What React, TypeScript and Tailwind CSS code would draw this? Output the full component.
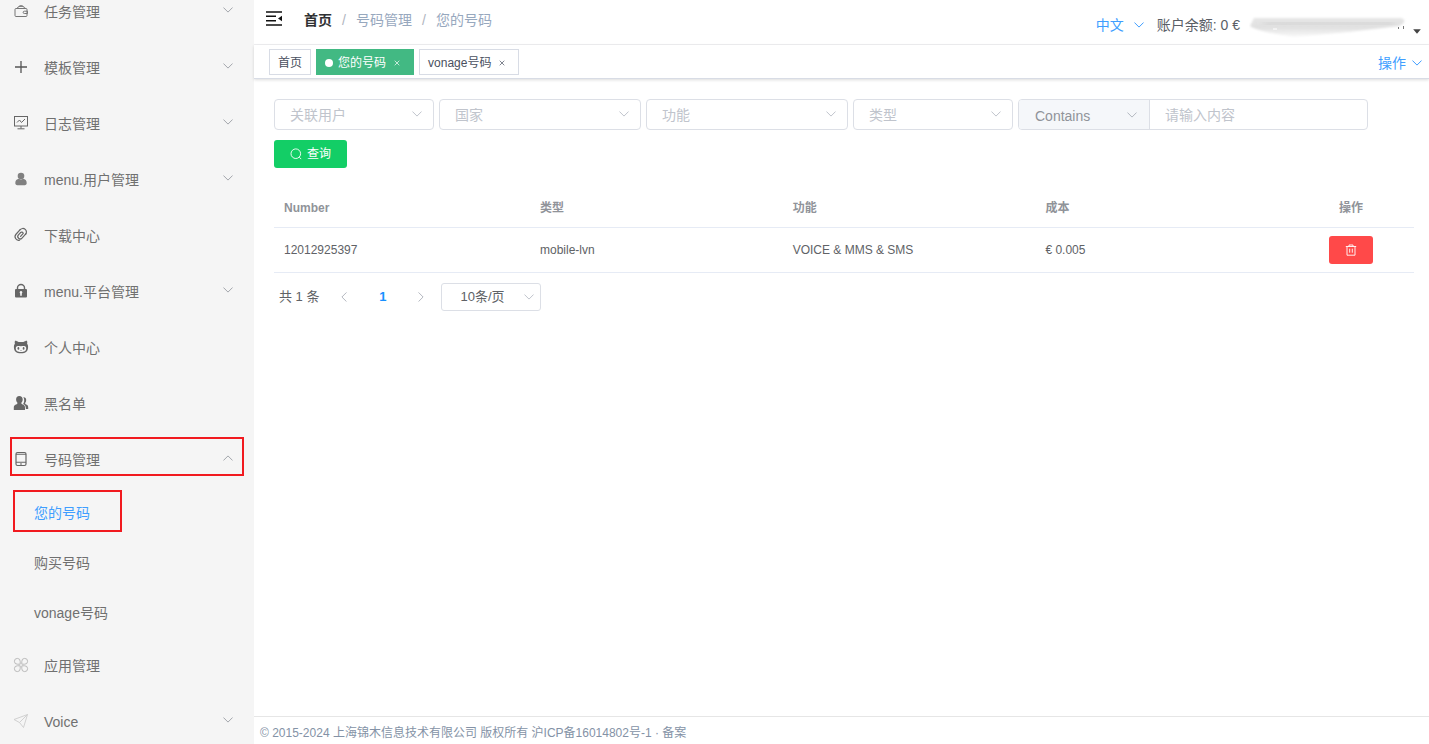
import type { ReactNode } from 'react';

const FONT = "font-['Liberation_Sans','Noto_Sans_CJK_SC',sans-serif]";

function Chevron({ className = '', up = false }: { className?: string; up?: boolean }) {
  return (
    <svg
      viewBox="0 0 10 6"
      className={`h-[6px] w-[10px] shrink-0 ${up ? 'rotate-180' : ''} ${className}`}
      fill="none"
      stroke="currentColor"
      strokeWidth="1"
      strokeLinecap="round"
      strokeLinejoin="round"
      aria-hidden="true"
    >
      <path d="M.7.8 5 5.1 9.3.8" />
    </svg>
  );
}

function Glyph({ children, className = '' }: { children: ReactNode; className?: string }) {
  return (
    <svg
      viewBox="0 0 16 16"
      className={`mb-[2px] size-4 shrink-0 ${className}`}
      fill="none"
      stroke="currentColor"
      strokeWidth="1"
      aria-hidden="true"
    >
      {children}
    </svg>
  );
}

const icons = {
  wallet: (
    <Glyph className="text-[#777]">
      <rect x="2" y="5.500" width="12" height="8" rx="1" />
      <path d="M3.500 5.500C5 3.700 6.500 3.300 8 3.300s3.500.4 4.500 2.200M5.500 3.900C6.300 2.300 9.800 2.200 10.600 3.900" />
      <path d="M14.500 8.200h-3.200a1.100 1.100 0 0 0 0 2.300h3.200z" />
    </Glyph>
  ),
  plus: (
    <Glyph className="text-[#555]">
      <path d="M8 2v12M2 8h12" strokeWidth="1.300" />
    </Glyph>
  ),
  board: (
    <Glyph className="text-[#666]">
      <rect x="1.500" y="1.500" width="13" height="9.500" />
      <path d="M4 7.500 6.500 5l2 2.500L12 4M8 11v2.500M4.500 13.800h7" />
    </Glyph>
  ),
  user: (
    <Glyph className="text-[#808080]">
      <g fill="currentColor" stroke="none">
        <circle cx="8" cy="5" r="3.300" />
        <path d="M2.300 12c0-2.700 1.400-4.100 3.700-4.300 1.200.9 2.800.9 4 0 2.300.2 3.700 1.600 3.700 4.300 0 1.300-.7 2.200-2 2.200H4.300c-1.300 0-2-.9-2-2.200z" />
      </g>
    </Glyph>
  ),
  link: (
    <Glyph className="text-[#666]">
      <g transform="rotate(42 8 8)" strokeWidth="1.200" strokeLinecap="round">
        <path d="M10.800 3.600V9.600a2.400 2.400 0 0 1-4.800 0V6.500" />
        <path d="M10.800 4.600a3.600 3.600 0 0 0-7.200 0" transform="translate(.2 0)" />
        <path d="M3.800 4.600V10.800a3.600 3.600 0 0 0 6.600 2" />
        <path d="M6 6.500a1.600 1.600 0 0 1 2.600-1.200V9.300" />
      </g>
    </Glyph>
  ),
  lock: (
    <Glyph className="text-[#666]">
      <path d="M4.500 7V4.800a3.500 3.300 0 0 1 7 0V7" strokeWidth="1.400" />
      <path
        d="M3 6h10a1 1 0 0 1 1 1v6.500a1 1 0 0 1-1 1H3a1 1 0 0 1-1-1V7a1 1 0 0 1 1-1zM8 8a1.400 1.400 0 0 0-.8 2.500V12.700h1.600v-2.200A1.400 1.400 0 0 0 8 8z"
        fill="currentColor"
        fillRule="evenodd"
        stroke="none"
      />
    </Glyph>
  ),
  cat: (
    <Glyph className="text-[#666]">
      <path
        d="M2 1.800c1.500 0 2.600.6 3.600 1.300 1.600-.3 3.200-.3 4.800 0 1-.7 2.100-1.300 3.600-1.300.4 1.100.4 2.100.1 3 .7.800 1 1.700 1 2.900 0 4.800-2.400 6.500-7.100 6.500S.9 12.500.9 7.700c0-1.200.3-2.100 1-2.900-.3-.9-.3-1.900.1-3z"
        fill="currentColor"
        stroke="none"
      />
      <path
        d="M4.800 7c1.100-.1 2 .2 3.200.2s2.100-.3 3.200-.2c1.300.1 2 .9 2 2.200 0 2.900-1.900 3.700-5.200 3.700s-5.200-.8-5.200-3.700c0-1.300.7-2.100 2-2.200z"
        fill="#f5f5f5"
        stroke="none"
      />
      <g fill="currentColor" stroke="none">
        <ellipse cx="5.400" cy="9.400" rx=".9" ry="1.300" />
        <ellipse cx="10.600" cy="9.400" rx=".9" ry="1.300" />
        <path d="M7.300 11.200h1.400v.6H7.300z" />
      </g>
    </Glyph>
  ),
  users: (
    <Glyph className="text-[#666]">
      <g fill="currentColor" stroke="none">
        <path d="M6.300 1c2.100 0 3.400 1.400 3.400 3.400 0 1.500-.7 2.700-1.400 3.400 0 1 .4 1.300 1.500 1.800 1.600.7 2.200 1.500 2.200 3.200V15H.8v-2.200c0-1.700.6-2.500 2.200-3.200 1.100-.5 1.500-.8 1.500-1.800-.7-.7-1.400-1.900-1.400-3.400C3.100 2.400 4.200 1 6.300 1z" />
        <path d="M10.300 2.200c1.900-.2 2.900 1 2.900 2.800 0 1.300-.4 2.300-1.100 3 0 .9.400 1.200 1.200 1.600 1.400.6 1.900 1.400 1.900 2.900v1.500h-2.300c0-2.700-.7-3.900-2.900-4.900.9-1.200 1.200-2.600 1.200-4.200 0-1.100-.3-2-.9-2.700z" />
      </g>
    </Glyph>
  ),
  phone: (
    <Glyph className="text-[#666]">
      <rect x="3" y="1.500" width="10" height="13" rx="1.500" strokeWidth="1.200" />
      <path d="M3 3.300h10M3 11.200h10M7 13h2" strokeWidth="1.100" />
    </Glyph>
  ),
  clover: (
    <Glyph className="text-[#bbb]">
      <path d="M7.200 7.200H4.300a2.900 2.900 0 1 1 2.900-2.900zM8.800 7.200V4.300a2.900 2.900 0 1 1 2.900 2.900zM7.200 8.800v2.900a2.900 2.900 0 1 1-2.900-2.900zM8.800 8.800h2.900a2.900 2.900 0 1 1-2.900 2.900z" />
    </Glyph>
  ),
  plane: (
    <Glyph className="text-[#ccc]">
      <path d="M1 6.500 14.500 1.500 10.500 14.500 6.500 9.500zM14.500 1.500 6.500 9.500" strokeWidth=".9" strokeLinejoin="round" />
    </Glyph>
  ),
};

type MenuItem = {
  label: string;
  icon: ReactNode;
  expand?: boolean;
  children?: string[];
};

const menu: MenuItem[] = [
  { label: '任务管理', icon: icons.wallet, expand: true },
  { label: '模板管理', icon: icons.plus, expand: true },
  { label: '日志管理', icon: icons.board, expand: true },
  { label: 'menu.用户管理', icon: icons.user, expand: true },
  { label: '下载中心', icon: icons.link },
  { label: 'menu.平台管理', icon: icons.lock, expand: true },
  { label: '个人中心', icon: icons.cat },
  { label: '黑名单', icon: icons.users },
  { label: '号码管理', icon: icons.phone, expand: true, children: ['您的号码', '购买号码', 'vonage号码'] },
  { label: '应用管理', icon: icons.clover },
  { label: 'Voice', icon: icons.plane, expand: true },
];

function Sidebar() {
  return (
    <nav className="w-[254px] shrink-0 overflow-hidden bg-[#f5f5f5] text-sm text-[#707070]">
      <ul className="-mt-4">
        {menu.map((item) => (
          <li key={item.label}>
            <a href="#" className="relative flex h-14 items-center pr-[21px] pl-[13px]">
              {item.icon}
              <span className="ml-[15px] grow">{item.label}</span>
              {item.expand && <Chevron up={!!item.children} className="mb-1 text-[#a3a6ac]" />}
              {item.children && (
                <span className="pointer-events-none absolute inset-x-[10px] top-[5px] h-[39px] border-2 border-[#f11a1f]" />
              )}
            </a>
            {item.children && (
              <ul>
                {item.children.map((child, i) => (
                  <li key={child}>
                    <a
                      href="#"
                      className={`relative flex h-[50px] items-center pl-[34px] ${i === 0 ? 'text-[#409eff]' : ''}`}
                    >
                      {child}
                      {i === 0 && (
                        <span className="pointer-events-none absolute top-[2px] left-[13px] h-[42px] w-[109px] border-2 border-[#f11a1f]" />
                      )}
                    </a>
                  </li>
                ))}
              </ul>
            )}
          </li>
        ))}
      </ul>
    </nav>
  );
}

function Header() {
  return (
    <header className="flex h-[45px] items-start border-b border-[#f0f0f2] pr-2 pl-3 text-sm">
      <button type="button" aria-label="折叠菜单" className="mt-[11px]">
        <svg viewBox="0 0 16 15" className="h-[15px] w-4" aria-hidden="true">
          <path d="M0 1h16M0 5.300h10M0 9.700h10M0 14h16" stroke="#111" strokeWidth="1.400" />
          <path d="m12 7.500 4-2.700v5.400z" fill="#111" />
        </svg>
      </button>
      <nav className="ml-[22px] flex h-10 items-center text-[#97a8be]">
        <a href="#" className="font-bold text-[#303133]">首页</a>
        <span className="w-6 text-center text-[#b0b5c0]">/</span>
        <a href="#">号码管理</a>
        <span className="w-6 text-center text-[#b0b5c0]">/</span>
        <span>您的号码</span>
      </nav>
      <div className="ml-auto flex h-[50px] items-center text-[#5a5e66]">
        <button type="button" className="flex items-center gap-[10px] text-[#409eff]">
          中文
          <Chevron />
        </button>
        <span className="ml-[13px]">账户余额: 0 €</span>
        <button type="button" aria-label="账户" className="ml-[9px] flex items-center gap-1">
          <svg viewBox="0 0 160 26" className="h-[26px] w-40" aria-hidden="true">
            <defs>
              <filter id="edge" x="-5%" y="-20%" width="110%" height="140%">
                <feGaussianBlur stdDeviation="1" />
              </filter>
              <filter id="soft" x="-10%" y="-80%" width="120%" height="260%">
                <feGaussianBlur stdDeviation="3" />
              </filter>
              <linearGradient id="fade" x1="0" y1="0" x2="0" y2="1">
                <stop offset="0" stopColor="#e6e6e6" />
                <stop offset=".5" stopColor="#e0e0e0" />
                <stop offset="1" stopColor="#fafafa" />
              </linearGradient>
            </defs>
            <path d="M5 6H152Q160 9 150 14L100 20 45 25Q6 19 1 14Z" fill="url(#fade)" filter="url(#edge)" />
            <path d="M15 12 60 11 145 11" stroke="#d4d4d4" strokeWidth="5" fill="none" filter="url(#soft)" />
            <path d="M24 17h4" stroke="#fff" strokeWidth="1" />
            <path d="M149.500 15v2M154.500 14v3" stroke="#777" strokeWidth="1" />
          </svg>
          <svg viewBox="0 0 8 5" className="mt-3 h-[5px] w-2" aria-hidden="true">
            <path d="M.2.300h7.600L4 4.700z" fill="#444" />
          </svg>
        </button>
      </div>
    </header>
  );
}

function Tabs() {
  return (
    <div className="flex h-[34px] items-center border-b border-[#d8dce5] pr-[7px] pl-[15px] text-xs shadow-[0_1px_3px_0_rgba(0,0,0,0.14)]">
      <div className="mt-1 flex gap-[5px] self-start text-[#495060]">
        <a href="#" className="flex h-[26px] items-center border border-[#d8dce5] px-2 pt-[2px]">首页</a>
        <a href="#" className="flex h-[26px] items-center border border-[#42b983] bg-[#42b983] px-2 pt-[2px] text-white">
          <span className="mr-[5px] size-2 rounded-full bg-white" />
          您的号码
          <CloseMark />
        </a>
        <a href="#" className="flex h-[26px] items-center border border-[#d8dce5] px-2 pt-[2px]">
          vonage号码
          <CloseMark />
        </a>
      </div>
      <button type="button" className="ml-auto flex items-center gap-[6px] pt-[2px] text-sm text-[#409eff]">
        操作
        <Chevron />
      </button>
    </div>
  );
}

function CloseMark() {
  return (
    <svg viewBox="0 0 6 6" className="mr-[5px] ml-2 size-[6px]" fill="none" stroke="currentColor" strokeWidth=".7" aria-hidden="true">
      <path d="m.7.7 4.600 4.600M5.300.7.7 5.300" />
    </svg>
  );
}

function Picker({ label, width }: { label: string; width: string }) {
  return (
    <div className={`relative ${width}`}>
      <select
        aria-label={label}
        className="h-[31px] w-full appearance-none rounded-[4px] border border-[#dcdfe6] bg-white px-[15px] text-sm text-[#c0c4cc]"
      >
        <option>{label}</option>
      </select>
      <Chevron className="pointer-events-none absolute top-3 right-3 text-[#c0c4cc]" />
    </div>
  );
}

function Filters() {
  return (
    <form className="flex flex-wrap gap-x-[5px] gap-y-[10px]">
      <Picker label="关联用户" width="w-40" />
      <Picker label="国家" width="w-[202px]" />
      <Picker label="功能" width="w-[202px]" />
      <Picker label="类型" width="w-40" />
      <div className="flex h-[31px] w-[350px] overflow-hidden rounded-[4px] border border-[#dcdfe6]">
        <div className="relative w-[131px] border-r border-[#dcdfe6] bg-[#f5f7fa]">
          <select aria-label="匹配方式" className="h-full w-full appearance-none pt-[3px] pl-4 text-sm text-[#909399]">
            <option>Contains</option>
          </select>
          <Chevron className="pointer-events-none absolute top-3 right-3 text-[#b4b8c0]" />
        </div>
        <input
          aria-label="内容"
          placeholder="请输入内容"
          className="w-0 grow px-[15px] text-sm placeholder:text-[#c0c4cc]"
        />
      </div>
      <div className="w-full">
        <button
          type="button"
          className="flex h-7 items-center gap-[5px] rounded-[3px] bg-[#13ce66] px-4 text-xs text-white"
        >
          <svg viewBox="0 0 12 12" className="size-3" fill="none" stroke="currentColor" strokeWidth=".9" aria-hidden="true">
            <circle cx="5.800" cy="5.700" r="4.800" />
            <path d="m9.300 9.200 1.900 1.900" />
          </svg>
          查询
        </button>
      </div>
    </form>
  );
}

function NumbersTable() {
  return (
    <table className="mt-[19px] w-full table-fixed text-left text-xs text-[#606266]">
      <thead className="text-[#909399]">
        <tr className="h-10 border-b border-[#e6ebf5]">
          <th className="w-64 px-[10px] pt-[2px]">Number</th>
          <th className="px-[10px] pt-[2px]">类型</th>
          <th className="px-[10px] pt-[2px]">功能</th>
          <th className="px-[10px] pt-[2px]">成本</th>
          <th className="w-[126px] px-[10px] pt-[2px] text-center">操作</th>
        </tr>
      </thead>
      <tbody>
        <tr className="h-[45px] border-b border-[#e6ebf5]">
          <td className="px-[10px]">12012925397</td>
          <td className="px-[10px]">mobile-lvn</td>
          <td className="px-[10px]">VOICE &amp; MMS &amp; SMS</td>
          <td className="px-[10px]">€ 0.005</td>
          <td>
            <button
              type="button"
              aria-label="删除"
              className="mx-auto flex h-7 w-11 items-center justify-center rounded-[3px] bg-[#ff4949] text-white"
            >
              <svg viewBox="0 0 12 12" className="size-3" fill="none" stroke="currentColor" strokeWidth=".9" aria-hidden="true">
                <path d="M.8 2.500h10.400M4 2.500V1h4v1.500M2 2.500v8.700h8V2.500M4.700 4.700v4M7.300 4.700v4" />
              </svg>
            </button>
          </td>
        </tr>
      </tbody>
    </table>
  );
}

function Pagination() {
  return (
    <div className="mt-[10px] flex h-7 items-center pl-[5px] text-[13px] text-[#606266]">
      <span>共 1 条</span>
      <button type="button" aria-label="上一页" className="ml-5 text-[#b4b8c0]">
        <Chevron className="rotate-90" />
      </button>
      <button type="button" className="w-[67px] text-center font-bold text-[#1890ff]">1</button>
      <button type="button" aria-label="下一页" className="text-[#b4b8c0]">
        <Chevron className="-rotate-90" />
      </button>
      <div className="relative ml-[15px] w-[100px]">
        <select
          aria-label="每页条数"
          className="h-7 w-full appearance-none rounded-[3px] border border-[#dcdfe6] bg-white pl-[18px] text-[13px]"
        >
          <option>10条/页</option>
        </select>
        <Chevron className="pointer-events-none absolute top-[11px] right-[7px] text-[#c0c4cc]" />
      </div>
    </div>
  );
}

export default function App() {
  return (
    <div className={`flex h-screen overflow-hidden bg-white ${FONT}`}>
      <Sidebar />
      <div className="flex min-w-0 grow flex-col">
        <Header />
        <Tabs />
        <main className="grow px-5 pt-5 pr-[15px]">
          <Filters />
          <NumbersTable />
          <Pagination />
        </main>
        <footer className="flex h-7 items-center border-t border-[#e6e6e6] px-[6px] pt-1 text-xs text-[#8492a6]">
          © 2015-2024 上海锦木信息技术有限公司 版权所有 沪ICP备16014802号-1 · 备案
        </footer>
      </div>
    </div>
  );
}
